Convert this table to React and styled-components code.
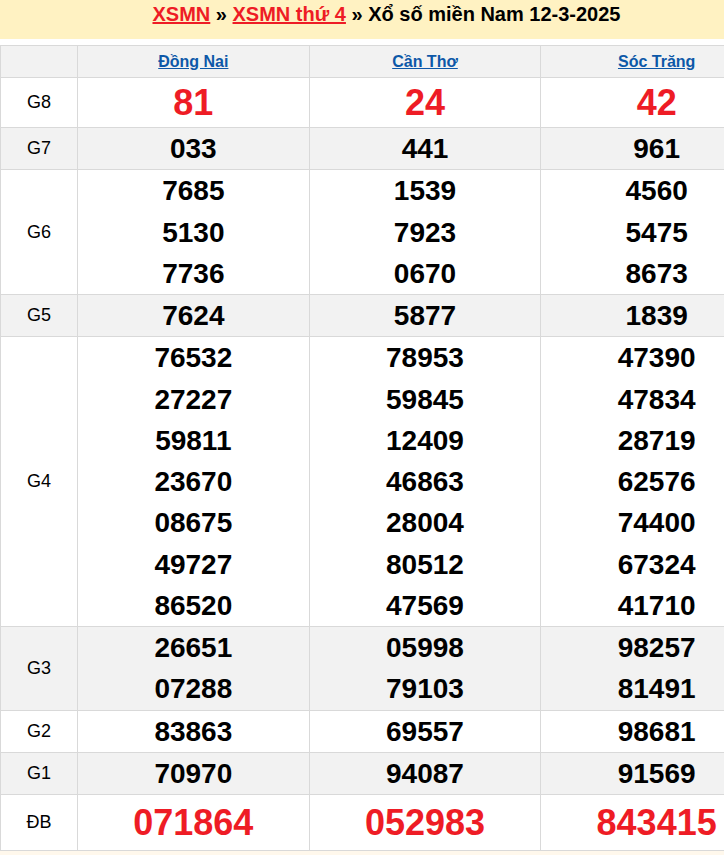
import styled, { createGlobalStyle } from 'styled-components'

const GlobalStyle = createGlobalStyle`
  html, body {
    margin: 0;
    padding: 0;
    overflow: hidden;
    background: #fff;
    font-family: "Liberation Sans", Arial, sans-serif;
  }
`

const provinces = ['Đồng Nai', 'Cần Thơ', 'Sóc Trăng']

const prizes = [
  { name: 'G8', kind: 'big', values: [['81'], ['24'], ['42']] },
  { name: 'G7', values: [['033'], ['441'], ['961']] },
  {
    name: 'G6',
    values: [
      ['7685', '5130', '7736'],
      ['1539', '7923', '0670'],
      ['4560', '5475', '8673'],
    ],
  },
  { name: 'G5', values: [['7624'], ['5877'], ['1839']] },
  {
    name: 'G4',
    values: [
      ['76532', '27227', '59811', '23670', '08675', '49727', '86520'],
      ['78953', '59845', '12409', '46863', '28004', '80512', '47569'],
      ['47390', '47834', '28719', '62576', '74400', '67324', '41710'],
    ],
  },
  {
    name: 'G3',
    values: [
      ['26651', '07288'],
      ['05998', '79103'],
      ['98257', '81491'],
    ],
  },
  { name: 'G2', values: [['83863'], ['69557'], ['98681']] },
  { name: 'G1', values: [['70970'], ['94087'], ['91569']] },
  { name: 'ĐB', kind: 'special', values: [['071864'], ['052983'], ['843415']] },
]

const Page = styled.div`
  width: 773px;
`

const TitleBar = styled.h1`
  margin: 0 0 6px;
  height: 39px;
  background: #fff2c2;
  text-align: center;
  font-size: 20px;
  line-height: 29px;
  font-weight: 700;
  color: #000;
`

const TitleLink = styled.a`
  color: #ee1c25;
  text-decoration: underline;
`

const Table = styled.table`
  width: 773px;
  border-collapse: collapse;
  table-layout: fixed;
`

const HeadCell = styled.th`
  height: 31px;
  padding: 0;
  background: #f2f2f2;
  border: 1px solid #d9d9d9;
  font-size: 16px;
  font-weight: 700;
  text-align: center;
  vertical-align: middle;
`

const ProvinceLink = styled.a`
  color: #0d58a8;
  text-decoration: underline;
`

const Row = styled.tr`
  background: ${(p) => (p.$shade ? '#f2f2f2' : '#fff')};
`

const LabelCell = styled.td`
  width: 76px;
  padding: 0;
  border: 1px solid #d9d9d9;
  font-size: 18px;
  color: #000;
  text-align: center;
  vertical-align: middle;
`

const NumberCell = styled.td`
  padding: 0;
  border: 1px solid #d9d9d9;
  text-align: center;
  vertical-align: middle;
`

const Number = styled.div`
  font-weight: 700;
  font-size: ${(p) => (p.$kind ? '36px' : '28px')};
  line-height: ${(p) =>
    p.$kind === 'big' ? '49px' : p.$kind === 'special' ? '55px' : '41.25px'};
  color: ${(p) => (p.$kind ? '#ee1c25' : '#000')};
`

const Footer = styled.div`
  height: 20px;
  background: #fff8ec;
`

export default function App() {
  return (
    <Page>
      <GlobalStyle />
      <TitleBar>
        <TitleLink href='#'>XSMN</TitleLink> »{' '}
        <TitleLink href='#'>XSMN thứ 4</TitleLink> » Xổ số miền Nam 12-3-2025
      </TitleBar>
      <Table>
        <thead>
          <tr>
            <HeadCell style={{ width: 76 }} />
            {provinces.map((p) => (
              <HeadCell key={p}>
                <ProvinceLink href='#'>{p}</ProvinceLink>
              </HeadCell>
            ))}
          </tr>
        </thead>
        <tbody>
          {prizes.map((prize, i) => (
            <Row key={prize.name} $shade={i % 2 === 1}>
              <LabelCell>{prize.name}</LabelCell>
              {prize.values.map((nums, j) => (
                <NumberCell key={j}>
                  {nums.map((n) => (
                    <Number key={n} $kind={prize.kind}>
                      {n}
                    </Number>
                  ))}
                </NumberCell>
              ))}
            </Row>
          ))}
        </tbody>
      </Table>
      <Footer />
    </Page>
  )
}
